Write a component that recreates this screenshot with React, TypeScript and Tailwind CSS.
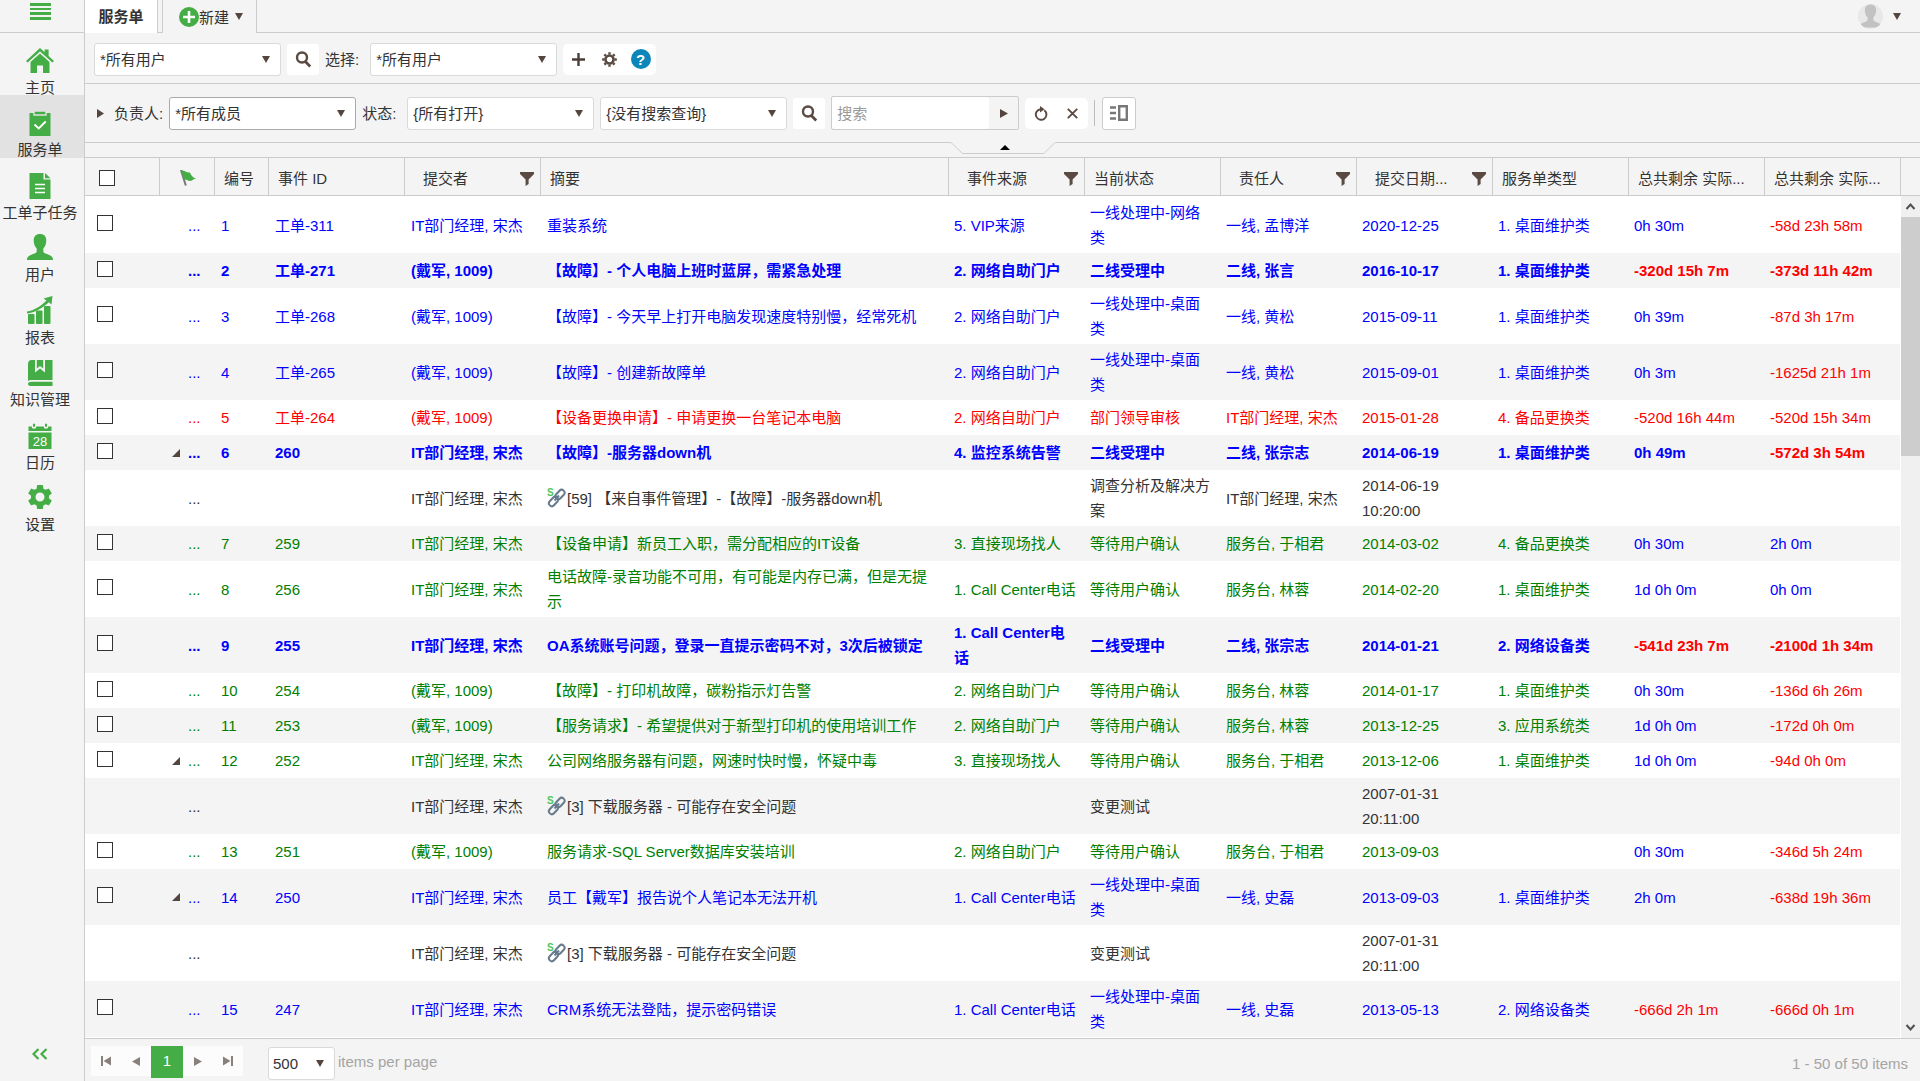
import React from "react";
import { MdSettings } from "react-icons/md";

type Tone = "blue" | "green" | "red" | "dark";

interface Ticket {
  no?: string;
  id?: string;
  submitter: string;
  summary: string;
  source?: string;
  status: string;
  owner?: string;
  date: string;
  type?: string;
  left?: string;
  left2?: string;
  tone: Tone;
  bold?: boolean;
  expanded?: boolean;
  tall?: boolean;
}

const IT = "IT部门经理, 宋杰";
const DAI = "(戴军, 1009)";

const tickets: Ticket[] = [
  { no: "1", id: "工单-311", submitter: IT, summary: "重装系统", source: "5. VIP来源", status: "一线处理中-网络类", owner: "一线, 孟博洋", date: "2020-12-25", type: "1. 桌面维护类", left: "0h 30m", left2: "-58d 23h 58m", tone: "blue", tall: true },
  { no: "2", id: "工单-271", submitter: DAI, summary: "【故障】- 个人电脑上班时蓝屏，需紧急处理", source: "2. 网络自助门户", status: "二线受理中", owner: "二线, 张言", date: "2016-10-17", type: "1. 桌面维护类", left: "-320d 15h 7m", left2: "-373d 11h 42m", tone: "blue", bold: true },
  { no: "3", id: "工单-268", submitter: DAI, summary: "【故障】- 今天早上打开电脑发现速度特别慢，经常死机", source: "2. 网络自助门户", status: "一线处理中-桌面类", owner: "一线, 黄松", date: "2015-09-11", type: "1. 桌面维护类", left: "0h 39m", left2: "-87d 3h 17m", tone: "blue", tall: true },
  { no: "4", id: "工单-265", submitter: DAI, summary: "【故障】- 创建新故障单", source: "2. 网络自助门户", status: "一线处理中-桌面类", owner: "一线, 黄松", date: "2015-09-01", type: "1. 桌面维护类", left: "0h 3m", left2: "-1625d 21h 1m", tone: "blue", tall: true },
  { no: "5", id: "工单-264", submitter: DAI, summary: "【设备更换申请】- 申请更换一台笔记本电脑", source: "2. 网络自助门户", status: "部门领导审核", owner: IT, date: "2015-01-28", type: "4. 备品更换类", left: "-520d 16h 44m", left2: "-520d 15h 34m", tone: "red" },
  { no: "6", id: "260", submitter: IT, summary: "【故障】-服务器down机", source: "4. 监控系统告警", status: "二线受理中", owner: "二线, 张宗志", date: "2014-06-19", type: "1. 桌面维护类", left: "0h 49m", left2: "-572d 3h 54m", tone: "blue", bold: true, expanded: true },
  { submitter: IT, summary: "[59] 【来自事件管理】-【故障】-服务器down机", status: "调查分析及解决方案", owner: IT, date: "2014-06-19 10:20:00", tone: "dark", tall: true },
  { no: "7", id: "259", submitter: IT, summary: "【设备申请】新员工入职，需分配相应的IT设备", source: "3. 直接现场找人", status: "等待用户确认", owner: "服务台, 于相君", date: "2014-03-02", type: "4. 备品更换类", left: "0h 30m", left2: "2h 0m", tone: "green" },
  { no: "8", id: "256", submitter: IT, summary: "电话故障-录音功能不可用，有可能是内存已满，但是无提示", source: "1. Call Center电话", status: "等待用户确认", owner: "服务台, 林蓉", date: "2014-02-20", type: "1. 桌面维护类", left: "1d 0h 0m", left2: "0h 0m", tone: "green", tall: true },
  { no: "9", id: "255", submitter: IT, summary: "OA系统账号问题，登录一直提示密码不对，3次后被锁定", source: "1. Call Center电话", status: "二线受理中", owner: "二线, 张宗志", date: "2014-01-21", type: "2. 网络设备类", left: "-541d 23h 7m", left2: "-2100d 1h 34m", tone: "blue", bold: true, tall: true },
  { no: "10", id: "254", submitter: DAI, summary: "【故障】- 打印机故障，碳粉指示灯告警", source: "2. 网络自助门户", status: "等待用户确认", owner: "服务台, 林蓉", date: "2014-01-17", type: "1. 桌面维护类", left: "0h 30m", left2: "-136d 6h 26m", tone: "green" },
  { no: "11", id: "253", submitter: DAI, summary: "【服务请求】- 希望提供对于新型打印机的使用培训工作", source: "2. 网络自助门户", status: "等待用户确认", owner: "服务台, 林蓉", date: "2013-12-25", type: "3. 应用系统类", left: "1d 0h 0m", left2: "-172d 0h 0m", tone: "green" },
  { no: "12", id: "252", submitter: IT, summary: "公司网络服务器有问题，网速时快时慢，怀疑中毒", source: "3. 直接现场找人", status: "等待用户确认", owner: "服务台, 于相君", date: "2013-12-06", type: "1. 桌面维护类", left: "1d 0h 0m", left2: "-94d 0h 0m", tone: "green", expanded: true },
  { submitter: IT, summary: "[3] 下载服务器 - 可能存在安全问题", status: "变更测试", date: "2007-01-31 20:11:00", tone: "dark", tall: true },
  { no: "13", id: "251", submitter: DAI, summary: "服务请求-SQL Server数据库安装培训", source: "2. 网络自助门户", status: "等待用户确认", owner: "服务台, 于相君", date: "2013-09-03", left: "0h 30m", left2: "-346d 5h 24m", tone: "green" },
  { no: "14", id: "250", submitter: IT, summary: "员工【戴军】报告说个人笔记本无法开机", source: "1. Call Center电话", status: "一线处理中-桌面类", owner: "一线, 史磊", date: "2013-09-03", type: "1. 桌面维护类", left: "2h 0m", left2: "-638d 19h 36m", tone: "blue", expanded: true, tall: true },
  { submitter: IT, summary: "[3] 下载服务器 - 可能存在安全问题", status: "变更测试", date: "2007-01-31 20:11:00", tone: "dark", tall: true },
  { no: "15", id: "247", submitter: IT, summary: "CRM系统无法登陆，提示密码错误", source: "1. Call Center电话", status: "一线处理中-桌面类", owner: "一线, 史磊", date: "2013-05-13", type: "2. 网络设备类", left: "-666d 2h 1m", left2: "-666d 0h 1m", tone: "blue", tall: true },
];

const toneClass: Record<Tone, string> = {
  blue: "text-[#0000ff]",
  green: "text-[#008000]",
  red: "text-[#ff0000]",
  dark: "text-[#333333]",
};

const Caret = ({ className = "" }: { className?: string }) => (
  <svg width="8" height="7" viewBox="0 0 8 7" className={className}>
    <path d="M0 0h8L4 7z" fill="#54453e" />
  </svg>
);

const Magnifier = () => (
  <svg width="18" height="18" viewBox="0 0 18 18" fill="none" stroke="#5a4a42">
    <circle cx="8" cy="7.500" r="5" strokeWidth="2.400" />
    <path d="M11.300 11.500l4.900 4.900" strokeWidth="2.800" />
  </svg>
);

const Funnel = () => (
  <svg width="14" height="14" viewBox="0 0 14 14" fill="#5a4a42">
    <path d="M0 0h14v2L8.600 7.600V12L5.600 14V7.600L0 2z" />
  </svg>
);

const LinkIcon = () => (
  <svg width="19" height="20" viewBox="0 0 19 20" className="shrink-0">
    <g fill="none" stroke="#667b8c" strokeWidth="2">
      <rect x="-5.300" y="-2.900" width="10.600" height="5.800" rx="2.900" transform="translate(13 6.500) rotate(-47)" />
      <rect x="-5.300" y="-2.900" width="10.600" height="5.800" rx="2.900" transform="translate(6.500 13.500) rotate(-47)" />
      <path d="M7.500 12.500l4.500-5" />
    </g>
    <text x="0" y="8" fontSize="10" fontWeight="bold" fill="#4fc65a" fontFamily="Liberation Sans">
      S
    </text>
  </svg>
);

const HomeIcon = () => (
  <svg width="28" height="28" viewBox="0 0 28 28" fill="#45ad45">
    <path d="M14 2l4.600 4.300V3.400h4v6.600L28 15l-1.600 1.600L14 5.400 1.600 16.600 0 15z" />
    <path d="M14 7.400l9.500 8.600V27h-6.500v-7.500h-6V27H4.500V16z" />
  </svg>
);

const TicketIcon = () => (
  <svg width="28" height="28" viewBox="0 0 28 28">
    <path d="M3.500 5h21v23h-21z" fill="#45ad45" />
    <path d="M8 3h12v4H8z" fill="#45ad45" stroke="#e2e2e2" strokeWidth="1.400" />
    <path d="M8.500 16.500l4.200 4 7-7" fill="none" stroke="#fff" strokeWidth="1.800" />
  </svg>
);

const DocIcon = () => (
  <svg width="28" height="28" viewBox="0 0 28 28">
    <path d="M3.500 2h14v6.500h7V28h-21zM19 2l5.500 5.200H19z" fill="#45ad45" />
    <path d="M9 13.500h10M9 17.500h10M9 21.500h10" stroke="#fff" strokeWidth="1.500" />
  </svg>
);

const UserIcon = ({ fill = "#45ad45" }: { fill?: string }) => (
  <svg width="28" height="28" viewBox="0 0 28 28" fill={fill}>
    <path d="M14 1c4.200 0 6.300 2.600 6.300 6.300 0 4-1.300 6.400-3 8.200v2.700c0 1.400 1.500 2 3.700 2.900C24.800 22.600 27 23.600 27 27H1c0-3.400 2.200-4.400 6-5.900 2.200-.9 3.700-1.500 3.700-2.900v-2.700c-1.700-1.800-3-4.200-3-8.200C7.700 3.600 9.800 1 14 1z" />
  </svg>
);

const ReportIcon = () => (
  <svg width="28" height="28" viewBox="0 0 28 28" fill="#45ad45">
    <rect x="2" y="18" width="6.500" height="10" rx="1" />
    <rect x="10" y="14.500" width="6.500" height="13.500" rx="1" />
    <rect x="18" y="10" width="6.500" height="18" rx="1" />
    <path d="M1 15.500C8 14.500 15 10 20.500 4.500L17.500 2.500 26.500 0 25.500 8.500 22.800 6.200C16 12.500 9 16.400 1 17.500z" />
  </svg>
);

const BookIcon = () => (
  <svg width="28" height="28" viewBox="0 0 28 28" fill="#45ad45">
    <path d="M5.500 2H9v12.500l5-4 5 4V2h7.500v20H5.500c-1.500 0-3 .5-3.500 1.300V6c0-2.500 1.500-4 3.500-4z" />
    <path d="M10.800 2h6.400v8.600L14 8l-3.200 2.600z" />
    <path d="M5.500 23.700h21V28h-21C3.400 28 2 27.200 2 25.900s1.400-2.200 3.500-2.200z" />
  </svg>
);

const CalendarIcon = () => (
  <svg width="28" height="28" viewBox="0 0 28 28">
    <path d="M2.500 11.500h23V28h-23zM2.500 10V5.500h3.200a2.300 2.300 0 0 0 4.600 0h7.400a2.300 2.300 0 0 0 4.600 0h3.200V10z" fill="#45ad45" />
    <path d="M8 2.800v3M20 2.800v3" stroke="#45ad45" strokeWidth="2" />
    <text x="14" y="24.500" textAnchor="middle" fontSize="13" fill="#fff" fontFamily="Liberation Sans">
      28
    </text>
  </svg>
);

const navItems = [
  { label: "主页", icon: <HomeIcon /> },
  { label: "服务单", icon: <TicketIcon />, active: true },
  { label: "工单子任务", icon: <DocIcon /> },
  { label: "用户", icon: <UserIcon /> },
  { label: "报表", icon: <ReportIcon /> },
  { label: "知识管理", icon: <BookIcon /> },
  { label: "日历", icon: <CalendarIcon /> },
  { label: "设置", icon: <MdSettings size={30} className="-m-px text-[#45ad45]" /> },
];

function Sidebar() {
  return (
    <aside className="flex w-[84px] shrink-0 flex-col">
      <button aria-label="菜单" className="flex h-[33px] w-full justify-center border-b border-[#cccccc] pt-[3px] pr-[3px]">
        <svg width="21" height="17" viewBox="0 0 21 17" fill="#45ad45">
          <path d="M0 0h21v3H0zM0 5h21v2H0zM0 9h21v3H0zM0 14h21v3H0z" />
        </svg>
      </button>
      <nav>
        {navItems.map((item) => (
          <a
            key={item.label}
            href="#"
            className={`flex h-[62px] flex-col items-center gap-[6px] pt-[13px] pr-1 whitespace-nowrap even:h-[63px] ${
              item.active ? "bg-[#e2e2e2]" : ""
            }`}
          >
            {item.icon}
            <span className="leading-[15px]">{item.label}</span>
          </a>
        ))}
      </nav>
      <button aria-label="收起" className="mt-auto mb-[21px] flex justify-center pr-1">
        <svg width="16" height="12" viewBox="0 0 16 12" fill="none" stroke="#45ad45" strokeWidth="2.200">
          <path d="M6.500 1L1.500 6l5 5M14.500 1L9.500 6l5 5" />
        </svg>
      </button>
    </aside>
  );
}

function Dropdown({ value, label, dark }: { value: string; label: string; dark?: boolean }) {
  return (
    <div className="relative w-[187px]">
      <select
        aria-label={label}
        className={`h-[33px] w-full appearance-none rounded-[3px] border bg-white pr-7 pl-[5px] ${
          dark ? "border-[#aaaaaa]" : "border-[#dadada]"
        }`}
      >
        <option>{value}</option>
      </select>
      <Caret className="pointer-events-none absolute top-[13px] right-[11px]" />
    </div>
  );
}

const SearchButton = () => (
  <button aria-label="查找" className="flex h-[31px] w-8 items-center justify-center rounded-[3px] bg-white">
    <Magnifier />
  </button>
);

function TopTabs() {
  return (
    <header className="flex h-[33px]">
      <a href="#" className="flex w-[73px] items-center justify-center border-r border-[#cccccc] bg-white font-bold">
        服务单
      </a>
      <div className="w-[4px] border-b border-[#cccccc]" />
      <button className="flex w-[95px] items-center border-x border-[#cccccc] pl-4">
        <svg width="20" height="20" viewBox="0 0 20 20">
          <circle cx="10" cy="10" r="10" fill="#45ad45" />
          <path d="M10 4v12M4 10h12" stroke="#fff" strokeWidth="2.600" />
        </svg>
        <span className="pt-px">新建</span>
        <Caret className="ml-[6px]" />
      </button>
      <div className="flex flex-1 items-center justify-end gap-[10px] border-b border-[#cccccc] pr-[19px]">
        <span className="flex size-[25px] items-center justify-center overflow-hidden rounded-full bg-[#e8e8e8]">
          <UserIcon fill="#c2c2c2" />
        </span>
        <Caret />
      </div>
    </header>
  );
}

function UserBar() {
  return (
    <div className="flex h-[51px] items-center gap-[6px] border-b border-[#cccccc] pt-[2px] pl-[9px]">
      <Dropdown value="*所有用户" label="用户" />
      <SearchButton />
      <span className="pr-[5px]">选择:</span>
      <Dropdown value="*所有用户" label="选择" />
      <div className="flex h-[31px] rounded-[5px] bg-white">
        <button aria-label="添加" className="flex w-[31px] items-center justify-center">
          <svg width="13" height="13" viewBox="0 0 13 13">
            <path d="M6.500 0v13M0 6.500h13" stroke="#4b3e38" strokeWidth="2.400" />
          </svg>
        </button>
        <button aria-label="设置" className="flex w-[31px] items-center justify-center">
          <svg width="15" height="15" viewBox="-7.500 -7.500 15 15" stroke="#5a4a42" fill="none">
            <circle r="4" strokeWidth="2.600" />
            <path d="M0-7.300V-5M0 7.300V5M-7.300 0H-5M7.300 0H5M-5.100-5.100l1.500 1.500M5.100 5.100L3.600 3.600M-5.100 5.100l1.500-1.500M5.100-5.100L3.600-3.600" strokeWidth="2.400" />
          </svg>
        </button>
        <button aria-label="帮助" className="flex w-[31px] items-center justify-center">
          <span className="flex size-5 items-center justify-center rounded-full bg-[#0b86b8] text-[15px] font-bold text-white">
            ?
          </span>
        </button>
      </div>
    </div>
  );
}

function FilterBar() {
  return (
    <div className="flex h-[59px] items-center gap-[6px] border-b border-[#cccccc] pl-3">
      <button aria-label="展开" className="w-[7px]">
        <svg width="7" height="9" viewBox="0 0 7 9">
          <path d="M0 0l7 4.500L0 9z" fill="#54453e" />
        </svg>
      </button>
      <span className="pl-1">负责人:</span>
      <Dropdown value="*所有成员" label="负责人" dark />
      <span className="pr-[5px]">状态:</span>
      <Dropdown value="{所有打开}" label="状态" />
      <Dropdown value="{没有搜索查询}" label="搜索查询" />
      <SearchButton />
      <div className="flex h-[34px] w-[188px] rounded-[2px] border border-[#cccccc]">
        <input
          type="text"
          aria-label="搜索"
          placeholder="搜索"
          className="w-[157px] rounded-[3px] bg-white pl-[5px] outline-none placeholder:text-[#999999]"
        />
        <button aria-label="搜索选项" className="flex flex-1 items-center justify-center">
          <svg width="8" height="9" viewBox="0 0 8 9">
            <path d="M0 0l8 4.500L0 9z" fill="#54453e" />
          </svg>
        </button>
      </div>
      <div className="flex h-[31px] rounded-[5px] bg-white">
        <button aria-label="刷新" className="flex w-8 items-center justify-center">
          <svg width="14" height="15" viewBox="0 0 14 15">
            <path d="M10.300 4.200A5.300 5.300 0 1 1 6.500 3.200" fill="none" stroke="#5a4a42" strokeWidth="1.900" />
            <path d="M6 0l4.600 3.200-4.600 3.300z" fill="#5a4a42" />
          </svg>
        </button>
        <button aria-label="清除" className="flex w-[31px] items-center justify-center">
          <svg width="11" height="11" viewBox="0 0 11 11">
            <path d="M.8.800l9.400 9.400M10.200.8L.8 10.200" stroke="#5a4a42" strokeWidth="1.900" />
          </svg>
        </button>
      </div>
      <div className="h-[26px] w-px bg-[#bdbdbd]" />
      <button aria-label="布局" className="ml-[1px] flex h-[33px] w-[34px] items-center justify-center rounded-[3px] border border-[#cccccc] bg-white">
        <svg width="18" height="16" viewBox="0 0 18 16">
          <path d="M0 2.500h6M0 8h6M0 13.500h6" stroke="#777" strokeWidth="2.400" />
          <path d="M9.200 1.200h7.600v13.600H9.200z" fill="none" stroke="#777" strokeWidth="2.400" />
        </svg>
      </button>
    </div>
  );
}

const Collapse = () => (
  <div className="flex h-[15px] justify-center border-b border-[#cccccc]">
    <button aria-label="折叠" className="-mt-px h-[13px]">
      <svg width="104" height="13" viewBox="0 0 104 13">
        <path d="M0 0h104v1L93 11.500H11L0 1z" fill="#f4f4f4" />
        <path d="M0 .5L11.500 11.500H93L104 .5" fill="none" stroke="#cccccc" />
        <path d="M49 8l5-5 5 5z" fill="#000" />
      </svg>
    </button>
  </div>
);

// the header and the body tables share one set of column widths
const Cols = () => (
  <colgroup>
    <col className="w-[75px]" />
    <col className="w-[55px]" />
    <col className="w-[54px]" />
    <col className="w-[136px]" />
    <col className="w-[136px]" />
    <col />
    <col className="w-[136px]" />
    <col className="w-[136px]" />
    <col className="w-[136px]" />
    <col className="w-[136px]" />
    <col className="w-[136px]" />
    <col className="w-[136px]" />
    <col className="w-[136px]" />
  </colgroup>
);

const headers = [
  { title: "编号" },
  { title: "事件 ID" },
  { title: "提交者", filter: true },
  { title: "摘要" },
  { title: "事件来源", filter: true },
  { title: "当前状态" },
  { title: "责任人", filter: true },
  { title: "提交日期...", filter: true },
  { title: "服务单类型" },
  { title: "总共剩余 实际..." },
  { title: "总共剩余 实际..." },
];

const Check = ({ label }: { label: string }) => (
  <input
    type="checkbox"
    aria-label={label}
    className="block size-4 appearance-none border border-[#333333] bg-white"
  />
);

function GridHeader() {
  return (
    <div className="border-b border-[#cccccc] pr-[19px]">
      <table className="w-full table-fixed border-separate border-spacing-0">
        <Cols />
        <thead>
          <tr className="h-[37px] [&>th]:border-r [&>th]:border-[#cccccc] [&>th]:p-0 [&>th]:text-left [&>th]:font-normal">
            <th>
              <div className="pt-[3px] pl-[14px]">
                <Check label="全选" />
              </div>
            </th>
            <th>
              <svg width="16" height="16" viewBox="0 0 16 16" className="mt-[3px] ml-5">
                <path d="M1 0L5.800 15.500" stroke="#777" strokeWidth="2" />
                <path d="M1.500.5C5 .2 6.500 3.200 10 2.500c.8 3 3 5.300 6 6-2.500 0-4 2.800-6.500 2.500C7 10.600 6 9 3.800 9.800z" fill="#45ad45" />
              </svg>
            </th>
            {headers.map((h, i) => (
              <th key={i}>
                <div className={`flex items-center justify-between pt-[4px] pr-[6px] whitespace-nowrap ${h.filter ? "pl-[18px]" : "pl-[9px]"}`}>
                  {h.title}
                  {h.filter && <Funnel />}
                </div>
              </th>
            ))}
          </tr>
        </thead>
      </table>
    </div>
  );
}

function TicketRow({ t }: { t: Ticket }) {
  const tone = toneClass[t.tone];
  const time = (v?: string) => (v?.startsWith("-") ? "text-[#ff0000]" : "text-[#0000ff]");

  return (
    <tr
      className={`odd:bg-white even:bg-[#f4f4f4] [&>td]:pr-2 [&>td]:pl-[6px] ${t.tall ? "h-[56px]" : "h-[35px]"} ${
        t.bold ? "font-bold" : ""
      } ${tone}`}
    >
      <td>
        {t.no && (
          <div className="-mt-1 pl-[6px]">
            <Check label={`选择 ${t.no}`} />
          </div>
        )}
      </td>
      <td>
        <div className="flex items-center gap-2 pl-[6px]">
          <span className="w-2">
            {t.expanded && (
              <svg width="8" height="8" viewBox="0 0 8 8">
                <path d="M8 0v8H0z" fill="#54453e" />
              </svg>
            )}
          </span>
          ...
        </div>
      </td>
      <td>{t.no}</td>
      <td>{t.id}</td>
      <td>{t.submitter}</td>
      <td>
        {t.no ? (
          t.summary
        ) : (
          <span className="flex items-center gap-px">
            <LinkIcon />
            {t.summary}
          </span>
        )}
      </td>
      <td>{t.source}</td>
      <td>{t.status}</td>
      <td>{t.owner}</td>
      <td>{t.date}</td>
      <td>{t.type}</td>
      <td className={time(t.left)}>{t.left}</td>
      <td className={time(t.left2)}>{t.left2}</td>
    </tr>
  );
}

function Scrollbar() {
  return (
    <div className="flex w-[19px] shrink-0 flex-col items-center justify-between bg-[#f0f0f0]">
      <div className="flex h-[260px] w-full flex-col">
        <svg width="19" height="21" viewBox="0 0 19 21" fill="none" stroke="#505050" strokeWidth="2">
          <path d="M5.500 13l4-4.500 4 4.500" />
        </svg>
        <div className="flex-1 bg-[#cdcdcd]" />
      </div>
      <svg width="19" height="21" viewBox="0 0 19 21" fill="none" stroke="#505050" strokeWidth="2">
        <path d="M5.500 8l4 4.500 4-4.500" />
      </svg>
    </div>
  );
}

function Pager() {
  const arrow = "flex h-[30px] w-[30px] items-center justify-center bg-[#fcfcfc]";
  return (
    <footer className="flex h-[43px] shrink-0 items-start border-t border-[#cccccc] pt-[7px] pr-3 pl-[6px] text-[#a5a5a5]">
      <button aria-label="首页" className={arrow}>
        <svg width="10" height="10" viewBox="0 0 10 10" fill="#8a807b">
          <path d="M0 0h2v10H0zM10 .5v9L2.500 5z" />
        </svg>
      </button>
      <button aria-label="上一页" className={arrow}>
        <svg width="8" height="9" viewBox="0 0 8 9" fill="#8a807b">
          <path d="M8 0v9L0 4.500z" />
        </svg>
      </button>
      <button className="h-8 w-8 bg-[#45ad45] pb-1 text-white">1</button>
      <button aria-label="下一页" className={arrow}>
        <svg width="8" height="9" viewBox="0 0 8 9" fill="#8a807b">
          <path d="M0 0v9l8-4.500z" />
        </svg>
      </button>
      <button aria-label="末页" className={arrow}>
        <svg width="10" height="10" viewBox="0 0 10 10" fill="#8a807b">
          <path d="M8 0h2v10H8zM0 .5v9L7.500 5z" />
        </svg>
      </button>
      <label className="ml-[25px] flex">
        <span className="relative mt-px w-[67px]">
          <select aria-label="items per page" className="h-[33px] w-full appearance-none rounded-[3px] border border-[#dadada] bg-white pl-1 text-[#333333]">
            <option>500</option>
          </select>
          <Caret className="pointer-events-none absolute top-[13px] right-[11px]" />
        </span>
        <span className="pt-[3px] pl-[3px]">items per page</span>
      </label>
      <span className="ml-auto pt-[5px]">1 - 50 of 50 items</span>
    </footer>
  );
}

export default function App() {
  return (
    <div className="flex h-screen border-r border-white bg-[#f4f4f4] font-['Liberation_Sans','Noto_Sans_CJK_SC',sans-serif] text-[15px] leading-[25px] text-[#333333]">
      <Sidebar />
      <main className="flex min-w-0 flex-1 flex-col border-l border-[#cccccc]">
        <TopTabs />
        <UserBar />
        <FilterBar />
        <Collapse />
        <GridHeader />
        <div className="flex min-h-0 flex-1">
          <div className="min-w-0 flex-1 overflow-hidden bg-white pt-px pr-px">
            <table className="w-full table-fixed border-separate border-spacing-0">
              <Cols />
              <tbody>
                {tickets.map((t, i) => (
                  <TicketRow key={i} t={t} />
                ))}
              </tbody>
            </table>
          </div>
          <Scrollbar />
        </div>
        <Pager />
      </main>
    </div>
  );
}
